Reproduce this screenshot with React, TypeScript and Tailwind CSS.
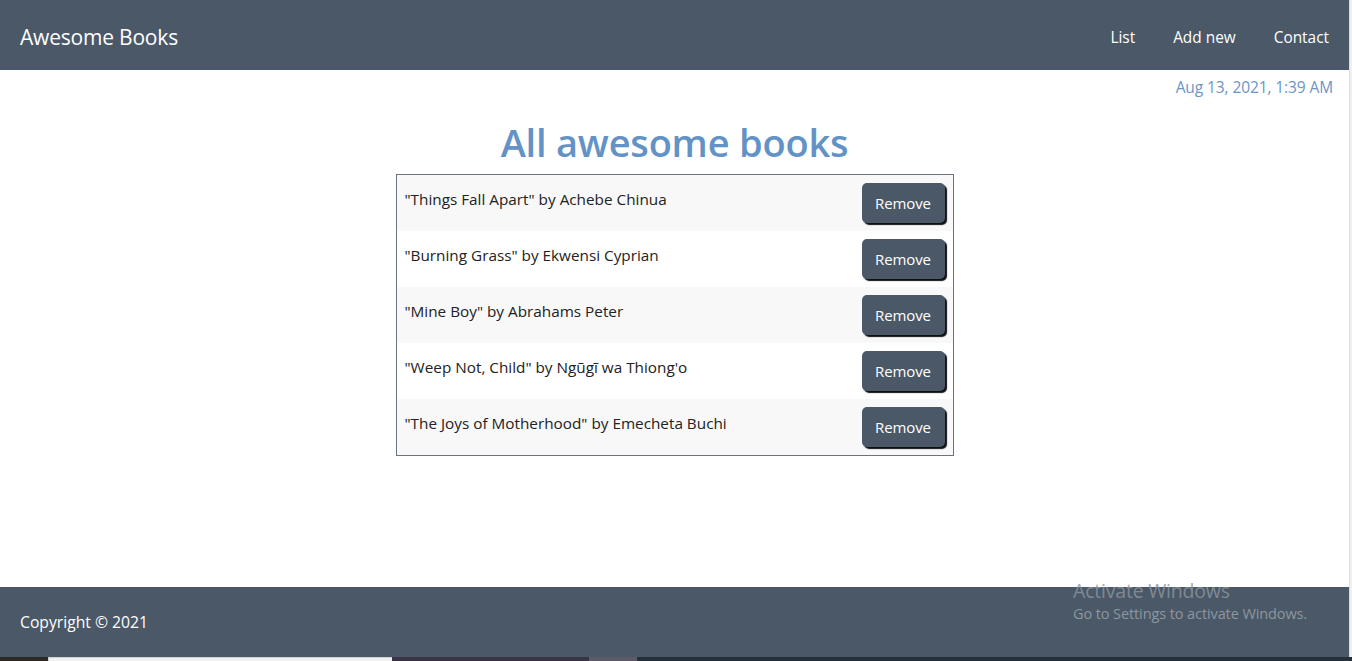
import React from "react";

const books = [
  ['"Things Fall Apart"', "Achebe Chinua"],
  ['"Burning Grass"', "Ekwensi Cyprian"],
  ['"Mine Boy"', "Abrahams Peter"],
  ['"Weep Not, Child"', "Ngũgĩ wa Thiong'o"],
  ['"The Joys of Motherhood"', "Emecheta Buchi"],
];

export default function App() {
  return (
    <div
      className="w-[1352px] h-[661px] overflow-hidden flex flex-col bg-white"
      style={{ fontFamily: '"Open Sans", "Noto Sans", sans-serif' }}
    >
      <div className="flex h-[657px]">
        <div className="flex-1 flex flex-col relative">
          <header className="h-[70px] bg-[#4a5868] flex items-center justify-between pl-5 pr-5 pt-[5px] text-white">
            <div className="text-[21px] tracking-[-0.2px]">Awesome Books</div>
            <nav className="flex gap-[38px] text-[15.4px]">
              <span>List</span>
              <span>Add new</span>
              <span>Contact</span>
            </nav>
          </header>
          <main className="flex-1 flex flex-col">
            <div className="text-right pr-4 pt-[5px] text-[15.5px] text-[#6b95c6] leading-[24px] tracking-[-0.1px]">
              Aug 13, 2021, 1:39 AM
            </div>
            <h1 className="text-center text-[38px] font-semibold text-[#6393c6] leading-[50px] mt-[18px] tracking-[-0.2px]">
              All awesome books
            </h1>
            <div className="mx-auto mt-[7px] w-[558px] border border-[#6b7280]">
              {books.map(([t, a], i) => (
                <div
                  key={i}
                  className={`h-[56px] flex items-start justify-between pl-2 pr-2 ${
                    i % 2 === 0 ? "bg-[#f8f8f8]" : "bg-white"
                  }`}
                >
                  <span className="text-[15.3px] text-[#222] pt-[13px] leading-[22px]">
                    {t} by {a}
                  </span>
                  <button className="mt-2 w-[83px] h-[40px] bg-[#4a5868] text-white rounded-[5px] text-[15px] tracking-[-0.1px] shadow-[2px_2px_1px_#111]">
                    Remove
                  </button>
                </div>
              ))}
            </div>
          </main>
          <footer className="h-[70px] bg-[#4a5868] flex items-center pl-5 pt-[2px] text-white text-[15.7px]">
            Copyright © 2021
          </footer>
          <div className="absolute left-[1073px] top-[578px] text-[#8e969e] pointer-events-none">
            <div className="text-[19.5px] leading-[26px] opacity-80 tracking-[-0.2px]">Activate Windows</div>
            <div className="text-[14.5px] leading-[20px] tracking-[-0.1px]">
              Go to Settings to activate Windows.
            </div>
          </div>
        </div>
        <div className="w-[3px] bg-[#f0f0f0] border-l border-[#dcdcdc]" />
      </div>
      <div className="h-[4px] flex">
        <div className="w-[48px] bg-[#2e2924]" />
        <div className="w-[344px] bg-[#f0f0f0] border-t border-l border-[#cfcfcf]" />
        <div className="w-[197px] bg-[#3b3447]" />
        <div className="w-[48px] bg-[#5c5a66]" />
        <div className="flex-1 bg-[#26303a]" />
      </div>
    </div>
  );
}
